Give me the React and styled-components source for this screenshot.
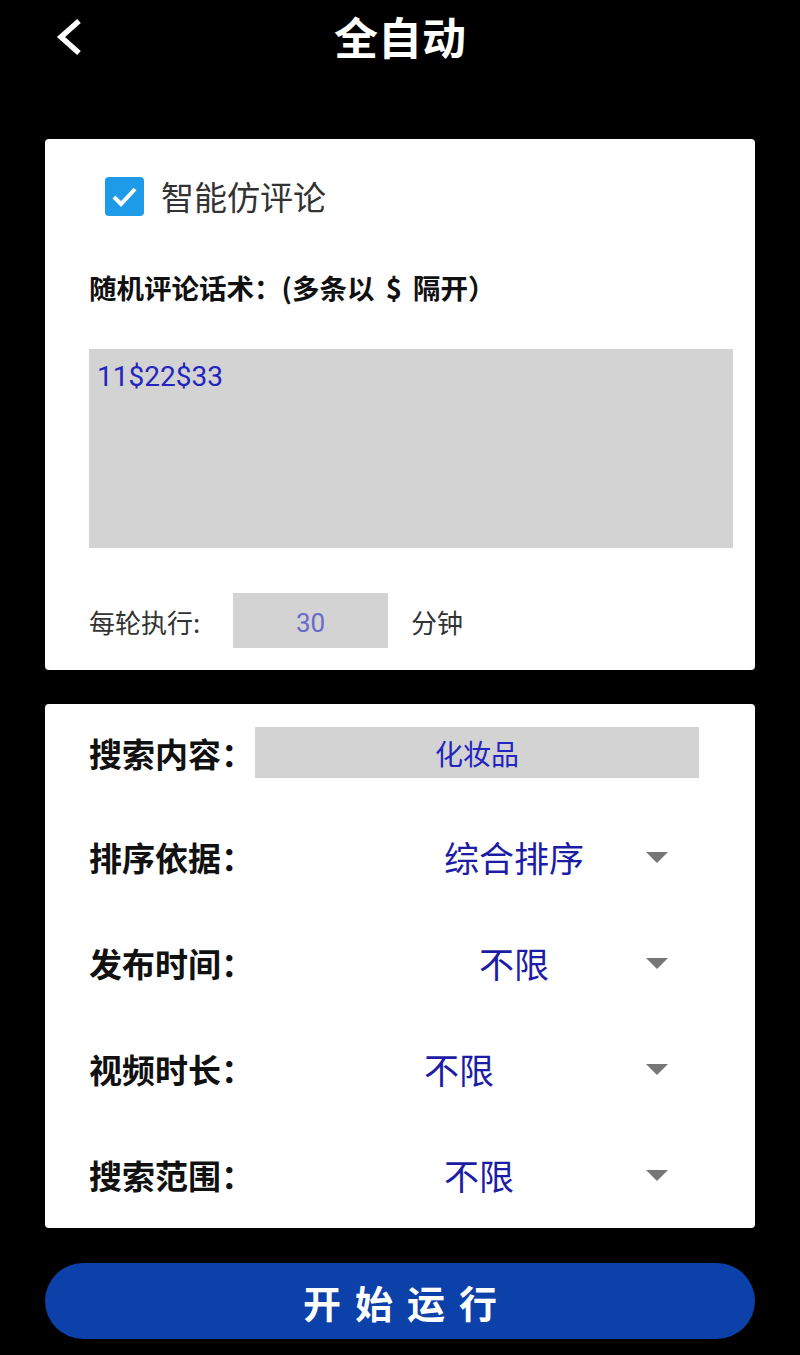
import React from "react";
import styled, { createGlobalStyle } from "styled-components";

const GlobalStyle = createGlobalStyle`
  html, body {
    margin: 0;
    padding: 0;
    background: #000;
  }
  * {
    box-sizing: border-box;
  }
  body {
    font-family: Roboto, "Noto Sans CJK SC", sans-serif;
  }
`;

const Page = styled.div`
  width: 800px;
  min-height: 1355px;
  background: #000;
  padding: 0 45px;
`;

const Header = styled.div`
  position: relative;
  height: 139px;
  display: flex;
  justify-content: center;
  padding-top: 8px;
`;

const BackButton = styled.button`
  position: absolute;
  left: 0;
  top: 16px;
  width: 40px;
  height: 44px;
  padding: 0;
  border: none;
  background: none;
  cursor: pointer;
`;

const Title = styled.h1`
  margin: 0;
  height: 56px;
  font: 700 44px/56px "Noto Sans CJK SC", sans-serif;
  color: #fff;
`;

const Card = styled.div`
  background: #fff;
  border-radius: 4px;
  margin-top: ${props => props.gap || 0}px;
  padding: ${props => props.pad};
`;

const CheckRow = styled.label`
  display: flex;
  align-items: center;
  gap: 17px;
  height: 39px;
  margin-left: 16px;
  cursor: pointer;
`;

const CheckBox = styled.span`
  width: 39px;
  height: 39px;
  border-radius: 4px;
  background: #1e9be8;
  display: flex;
  align-items: center;
  justify-content: center;
`;

const CheckLabel = styled.span`
  font: 400 33px/39px "Noto Sans CJK SC", sans-serif;
  color: #333;
`;

const Subtitle = styled.div`
  margin-top: 52px;
  font: 700 27.5px/38px "Noto Sans CJK SC", sans-serif;
  color: #111;
  white-space: pre;
  word-spacing: 5px;
`;

const TextArea = styled.div`
  margin-top: 43px;
  height: 199px;
  background: #d3d3d3;
  padding: 9px 8px;
  font: 400 28px/38px Roboto, "Noto Sans CJK SC", sans-serif;
  color: #2424c0;
`;

const ExecRow = styled.div`
  margin-top: 45px;
  display: flex;
  align-items: center;
  height: 55px;
`;

const SmallLabel = styled.span`
  font: 400 26px/36px "Noto Sans CJK SC", sans-serif;
  color: #333;
  width: ${props => props.w || "auto"};
  padding-top: 3px;
`;

const NumberBox = styled.div`
  width: 155px;
  height: 55px;
  background: #d3d3d3;
  display: flex;
  align-items: center;
  justify-content: center;
  padding-top: 4px;
  font: 400 26px Roboto, sans-serif;
  color: #6a6acc;
  margin-right: 23px;
`;

const SearchRow = styled.div`
  display: flex;
  align-items: center;
  height: 51px;
  margin-bottom: 26px;
`;

const FieldLabel = styled.span`
  width: 166px;
  flex-shrink: 0;
  font: 700 33px/44px "Noto Sans CJK SC", sans-serif;
  color: #111;
  white-space: nowrap;
`;

const SearchBox = styled.div`
  width: 444px;
  height: 51px;
  background: #d3d3d3;
  display: flex;
  align-items: center;
  justify-content: center;
  font: 400 28px "Noto Sans CJK SC", sans-serif;
  color: #2424c0;
`;

const SelectRow = styled.div`
  display: flex;
  align-items: center;
  height: 106px;
`;

const SelectValue = styled.div`
  flex: 1;
  text-align: center;
  padding-left: ${props => props.shift * 2}px;
  font: 400 35px/46px "Noto Sans CJK SC", sans-serif;
  color: #1c1ca6;
`;

const Arrow = styled.span`
  width: 0;
  height: 0;
  margin: 0 87px 0 7px;
  border-left: 11px solid transparent;
  border-right: 11px solid transparent;
  border-top: 11px solid #777;
`;

const StartButton = styled.button`
  display: flex;
  align-items: center;
  justify-content: center;
  width: 100%;
  height: 76px;
  margin-top: 35px;
  border: none;
  border-radius: 38px;
  background: #0b41a8;
  color: #fff;
  font: 700 38px "Noto Sans CJK SC", sans-serif;
  letter-spacing: 14px;
  padding-left: 20px;
  cursor: pointer;
`;

const selects = [
  { label: "排序依据：", value: "综合排序", shift: 67 },
  { label: "发布时间：", value: "不限", shift: 67 },
  { label: "视频时长：", value: "不限", shift: 12 },
  { label: "搜索范围：", value: "不限", shift: 32 }
];

export default function App() {
  return (
    <Page>
      <GlobalStyle />
      <Header>
        <BackButton aria-label="back">
          <svg width="40" height="44" viewBox="0 0 40 44">
            <polyline
              points="34,5 16,21 34,37"
              fill="none"
              stroke="#fff"
              strokeWidth="5.5"
            />
          </svg>
        </BackButton>
        <Title>全自动</Title>
      </Header>

      <Card pad="38px 22px 22px 44px">
        <CheckRow>
          <CheckBox>
            <svg width="39" height="39" viewBox="0 0 39 39">
              <polyline
                points="9,20 16,27 30,12"
                fill="none"
                stroke="#fff"
                strokeWidth="4"
              />
            </svg>
          </CheckBox>
          <CheckLabel>智能仿评论</CheckLabel>
        </CheckRow>
        <Subtitle>随机评论话术：(多条以 $ 隔开）</Subtitle>
        <TextArea>11$22$33</TextArea>
        <ExecRow>
          <SmallLabel w="144px">每轮执行:</SmallLabel>
          <NumberBox>30</NumberBox>
          <SmallLabel>分钟</SmallLabel>
        </ExecRow>
      </Card>

      <Card gap={34} pad="23px 0 0 44px">
        <SearchRow>
          <FieldLabel>搜索内容：</FieldLabel>
          <SearchBox>化妆品</SearchBox>
        </SearchRow>
        {selects.map(s => (
          <SelectRow key={s.label}>
            <FieldLabel>{s.label}</FieldLabel>
            <SelectValue shift={s.shift}>{s.value}</SelectValue>
            <Arrow />
          </SelectRow>
        ))}
      </Card>

      <StartButton>开始运行</StartButton>
    </Page>
  );
}
